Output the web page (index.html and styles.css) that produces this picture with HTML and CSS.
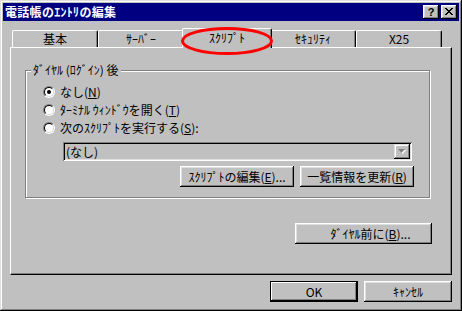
FILE: index.html
```html
<!DOCTYPE html>
<html lang="ja">
<head>
<meta charset="utf-8">
<title>電話帳のｴﾝﾄﾘの編集</title>
<link rel="stylesheet" href="styles.css">
</head>
<body>
<div class="window">
  <div class="titlebar">
    <span class="title">電話帳のｴﾝﾄﾘの編集</span>
    <div class="tb-btns">
      <span class="tb-btn help">?</span>
      <span class="tb-btn close"><svg width="8" height="7" viewBox="0 0 8 7"><path d="M0 0h2v1h1v1h2v-1h1v-1h2v1h-1v1h-1v1h-1v1h1v1h1v1h1v1h-2v-1h-1v-1h-2v1h-1v1h-2v-1h1v-1h1v-1h1v-1h-1v-1h-1v-1h-1z" fill="#000"/></svg></span>
    </div>
  </div>
  <div class="body">
    <div class="tabs">
      <div class="tab">基本</div>
      <div class="tab">ｻｰﾊﾞｰ</div>
      <div class="tab sel">ｽｸﾘﾌﾟﾄ<svg class="mark" width="92" height="28" viewBox="0 0 92 28"><ellipse cx="46" cy="14" rx="44.5" ry="12.5" fill="none" stroke="#f00" stroke-width="3"/></svg></div>
      <div class="tab">ｾｷｭﾘﾃｨ</div>
      <div class="tab">X25</div>
    </div>
    <div class="panel">
      <div class="group">
        <div class="group-label">ﾀﾞｲﾔﾙ (ﾛｸﾞｲﾝ) 後</div>
        <div class="radios">
          <div class="radio"><span class="rb checked"><span class="rb-in"></span></span><span>なし(<u>N</u>)</span></div>
          <div class="radio"><span class="rb"><span class="rb-in"></span></span><span>ﾀｰﾐﾅﾙ ｳｨﾝﾄﾞｳを開く(<u>T</u>)</span></div>
          <div class="radio"><span class="rb"><span class="rb-in"></span></span><span>次のｽｸﾘﾌﾟﾄを実行する(<u>S</u>):</span></div>
        </div>
        <div class="combo">
          <span class="combo-text">(なし)</span>
          <span class="combo-btn"><svg width="8" height="5" viewBox="0 0 8 5"><path d="M1 1h7l-3.5 4z" fill="#fff"/><path d="M0 0h7l-3.5 4z" fill="#808080"/></svg></span>
        </div>
        <div class="btn-row">
          <span class="btn w114">ｽｸﾘﾌﾟﾄの編集(<u>E</u>)...</span>
          <span class="btn w114">一覧情報を更新(<u>R</u>)</span>
        </div>
      </div>
      <div class="row-right">
        <span class="btn w137">ﾀﾞｲﾔﾙ前に(<u>B</u>)...</span>
      </div>
    </div>
    <div class="footer">
      <span class="btn default w88">OK</span>
      <span class="btn w88">ｷｬﾝｾﾙ</span>
    </div>
  </div>
</div>
</body>
</html>
```
FILE: styles.css
```css
html, body {
  margin: 0;
  padding: 0;
  background: #c0c0c0;
}
body {
  font-family: "Noto Sans CJK JP", "MS PGothic", sans-serif;
  font-size: 12px;
  color: #000;
  text-autospace: no-autospace;
  text-spacing-trim: space-all;
  font-kerning: none;
}
.window {
  box-sizing: border-box;
  width: 462px;
  height: 311px;
  padding: 3px;
  background: #c0c0c0;
  box-shadow: inset -1px -1px #000, inset 1px 1px #dfdfdf, inset -2px -2px #808080, inset 2px 2px #fff;
  display: flex;
  flex-direction: column;
}
.titlebar {
  height: 18px;
  background: #000080;
  display: flex;
  align-items: center;
  justify-content: space-between;
  padding-left: 2px;
  padding-right: 2px;
}
.title {
  color: #fff;
  font-weight: bold;
  font-size: 12px;
  line-height: 18px;
  letter-spacing: 0.3px;
}
.tb-btns {
  display: flex;
  gap: 2px;
}
.tb-btn {
  box-sizing: border-box;
  width: 16px;
  height: 14px;
  background: #c0c0c0;
  box-shadow: inset -1px -1px #000, inset 1px 1px #fff, inset -2px -2px #808080, inset 2px 2px #dfdfdf;
  display: flex;
  align-items: center;
  justify-content: center;
}
.help {
  font-family: "Liberation Sans", sans-serif;
  font-weight: bold;
  font-size: 11px;
  line-height: 14px;
  padding-bottom: 1px;
}
.close svg {
  display: block;
  margin-top: -1px;
}
.body {
  flex: 1;
  padding: 7px 7px 0;
  display: flex;
  flex-direction: column;
}
.tabs {
  height: 19px;
  display: flex;
  align-items: flex-end;
  padding-left: 2px;
  position: relative;
  z-index: 1;
}
.tab {
  box-sizing: border-box;
  width: 86px;
  height: 17px;
  border-top: 1px solid #fff;
  border-left: 1px solid #fff;
  border-right: 1px solid #000;
  border-radius: 2px 2px 0 0;
  box-shadow: inset -1px 0 #808080;
  background: #c0c0c0;
  text-align: center;
  line-height: 15px;
}
.tab.sel {
  width: 90px;
  height: 20px;
  margin: 0 -2px -1px;
  position: relative;
  z-index: 2;
  line-height: 17px;
}
.mark {
  position: absolute;
  left: -2px;
  top: -2px;
  overflow: visible;
  pointer-events: none;
}
.panel {
  box-sizing: border-box;
  height: 228px;
  border-top: 1px solid #fff;
  border-left: 1px solid #fff;
  border-right: 1px solid #000;
  border-bottom: 1px solid #000;
  box-shadow: inset -1px -1px #808080;
  padding: 0 19px 0 14px;
  display: flex;
  flex-direction: column;
}
.group {
  box-sizing: border-box;
  width: 405px;
  height: 128px;
  margin-top: 22px;
  border: 1px solid #808080;
  box-shadow: inset 1px 1px #fff, 1px 1px #fff;
  display: flex;
  flex-direction: column;
  padding: 0 15px 0 0;
}
.group-label {
  align-self: flex-start;
  margin-top: -8px;
  margin-left: 5px;
  padding: 0 2px;
  line-height: 14px;
  height: 14px;
  background: #c0c0c0;
}
.radios {
  margin-top: 6px;
  padding-left: 17px;
  display: flex;
  flex-direction: column;
}
.radio {
  height: 18px;
  display: flex;
  align-items: center;
  gap: 5px;
  line-height: 14px;
}
.rb {
  box-sizing: border-box;
  width: 12px;
  height: 12px;
  border-radius: 50%;
  border: 1px solid;
  border-color: #808080 #fff #fff #808080;
  display: flex;
}
.rb-in {
  box-sizing: border-box;
  flex: 1;
  border-radius: 50%;
  border: 1px solid;
  border-color: #000 #dfdfdf #dfdfdf #000;
  background: #fff;
  position: relative;
}
.rb.checked .rb-in::after {
  content: "";
  position: absolute;
  left: 2px;
  top: 2px;
  width: 4px;
  height: 4px;
  border-radius: 50%;
  background: #000;
}
.combo {
  box-sizing: border-box;
  width: 349px;
  height: 19px;
  margin-top: 5px;
  margin-left: 37px;
  box-shadow: inset 1px 1px #808080, inset -1px -1px #fff, inset 2px 2px #000, inset -2px -2px #dfdfdf;
  display: flex;
  align-items: center;
  justify-content: space-between;
  padding: 2px;
}
.combo-text {
  padding-left: 1px;
  line-height: 15px;
}
.combo-btn {
  box-sizing: border-box;
  width: 16px;
  height: 15px;
  background: #c0c0c0;
  box-shadow: inset -1px -1px #000, inset 1px 1px #dfdfdf, inset -2px -2px #808080, inset 2px 2px #fff;
  display: flex;
  align-items: center;
  justify-content: center;
}
.combo-btn svg {
  display: block;
}
.btn-row {
  margin-top: 5px;
  display: flex;
  justify-content: flex-end;
  gap: 6px;
}
.btn {
  box-sizing: border-box;
  height: 21px;
  background: #c0c0c0;
  box-shadow: inset -1px -1px #000, inset 1px 1px #fff, inset -2px -2px #808080, inset 2px 2px #dfdfdf;
  display: flex;
  align-items: center;
  justify-content: center;
  line-height: 14px;
  white-space: nowrap;
}
.btn.default {
  box-shadow: inset 0 0 0 1px #000, inset -2px -2px #000, inset 2px 2px #fff, inset -3px -3px #808080;
}
.w114 { width: 114px; }
.w137 { width: 137px; padding-left: 14px; }
.w88 { width: 88px; }
.row-right {
  margin-top: 25px;
  display: flex;
  justify-content: flex-end;
}
.footer {
  margin-top: 6px;
  display: flex;
  justify-content: flex-end;
  gap: 6px;
}
u {
  text-decoration: underline;
  text-underline-offset: 1px;
}
```
